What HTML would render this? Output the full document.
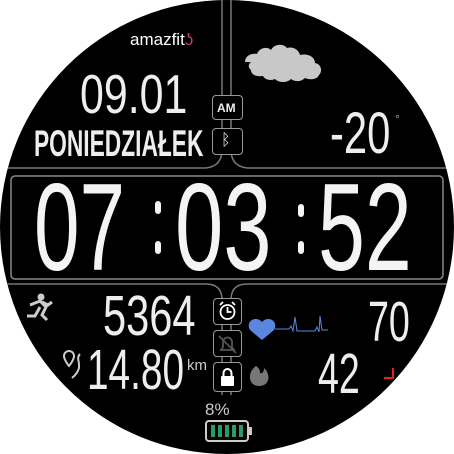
<!DOCTYPE html><html><head><meta charset="utf-8"><style>
body{margin:0;background:#fff;width:454px;height:454px;overflow:hidden;position:relative;font-family:"Liberation Sans",sans-serif}
#c{position:absolute;left:0;top:0;width:454px;height:454px;border-radius:50%;background:#000;overflow:hidden}
.t{position:absolute;color:#eee;white-space:nowrap;transform-origin:0 0;line-height:1}
.box{position:absolute;border:1.5px solid #999;border-radius:4px;background:#000;box-sizing:border-box}
</style></head><body><div id="c">
<svg width="454" height="454" style="position:absolute;left:0;top:0">
<g fill="none" stroke="#777" stroke-width="1.5">
<path d="M222 0V150Q222 166 206 168H0"/><path d="M231 0V150Q231 166 247 168H454"/>
<path d="M222 300Q222 284 206 284H0"/><path d="M231 300Q231 284 247 284H454"/>
<path d="M222 300V395M231 300V395"/>
</g>
<rect x="11" y="176" width="432" height="103" rx="4" fill="#000" stroke="#888" stroke-width="1.5"/>
<g fill="#f4f4f4"><rect x="155" y="201" width="6" height="13" rx="3"/><rect x="155" y="241" width="6" height="13" rx="3"/><rect x="298" y="204" width="6" height="13" rx="3"/><rect x="298" y="241" width="6" height="13" rx="3"/></g>
<path d="M245 62c0-6 6-9 12-8 2-6 10-8 14-4 3-6 12-7 16-2 6-2 12 2 13 7 8-2 15 2 15 8 6 1 8 8 4 12-2 5-10 5-14 3-4 4-10 4-14 1-4 4-12 4-16 0-4 2-10 1-12-3-6 1-12-1-12-6-3-2-3-6 0-8z" fill="#c8c8c8"/>
<path d="M262 322c-6-7-17-1-12 8l12 10 12-10c5-9-6-15-12-8z" fill="#5a86e0"/>
<path d="M275 329h14l2-3 2 5 2-14 2 14h18l2-4 2 5 1-16 2 14h6" fill="none" stroke="#5a86e0" stroke-width="1"/>
<path d="M393 368v10h-9" stroke="#d22" stroke-width="2" fill="none"/>
<circle cx="41" cy="297" r="3.5" fill="#ccc"/>
<path d="M30 305l10-4 6 6 -4 8 5 5M40 307l-5 9h-8M42 302l6 3 4-3" stroke="#ccc" stroke-width="3" fill="none"/>
<path d="M64 356a5 5 0 0 1 10 0c0 4-5 10-5 10s-5-6-5-10zM80 354c-6 6 6 12-8 24" stroke="#ccc" stroke-width="2" fill="none"/>
<path d="M256 366c-9 6-8 20 3 20s12-12 5-18c0 4-2 6-4 5 0-3-1-5-4-7z" fill="#777"/>
<rect x="206" y="421" width="42" height="20" rx="3" fill="none" stroke="#ccc" stroke-width="2"/><rect x="248" y="427" width="4" height="8" fill="#ccc"/>
<g fill="#2a9a6a"><rect x="211" y="425" width="4" height="12"/><rect x="218" y="425" width="4" height="12"/><rect x="225" y="425" width="4" height="12"/><rect x="232" y="425" width="4" height="12"/><rect x="239" y="425" width="4" height="12"/></g>
</svg>
<div class="t" style="left:130px;top:31px;font-size:17px;color:#fff">amazfit<span style="color:#c04070">ʖ</span></div>
<div class="t" style="left:80px;top:67px;font-size:55px;transform:scaleX(.78)">09.01</div>
<div class="t" style="left:34px;top:125px;font-size:37px;font-weight:bold;transform:scaleX(.615)">PONIEDZIAŁEK</div>
<div class="t" style="left:330px;top:105px;font-size:58px;transform:scaleX(.72)">-20</div>
<div class="t" style="left:395px;top:113px;font-size:12px;color:#aaa">°</div>
<div class="box" style="left:212px;top:95px;width:31px;height:25px"></div><div class="t" style="left:217px;top:102px;font-size:12px;font-weight:bold">AM</div>
<div class="box" style="left:212px;top:128px;width:31px;height:27px"></div><div class="t" style="left:221px;top:133px;font-size:16px">ᛒ</div>
<div class="t" style="left:34px;top:166px;font-size:124px;color:#f4f4f4;transform:scaleX(.66)">07</div>
<div class="t" style="left:175px;top:166px;font-size:124px;color:#f4f4f4;transform:scaleX(.7)">03</div>
<div class="t" style="left:318px;top:166px;font-size:124px;color:#f4f4f4;transform:scaleX(.68)">52</div>
<div class="t" style="left:103px;top:288px;font-size:57px;transform:scaleX(.73)">5364</div>
<div class="t" style="left:87px;top:342px;font-size:57px;transform:scaleX(.68)">14.80</div>
<div class="t" style="left:187px;top:358px;font-size:15px;color:#ccc">km</div>
<div class="t" style="left:368px;top:294px;font-size:57px;transform:scaleX(.66)">70</div>
<div class="t" style="left:318px;top:346px;font-size:57px;transform:scaleX(.66)">42</div>
<div class="box" style="left:213px;top:298px;width:29px;height:27px"></div>
<div class="box" style="left:213px;top:330px;width:29px;height:27px"></div>
<div class="box" style="left:213px;top:362px;width:29px;height:30px"></div>
<svg width="454" height="454" style="position:absolute;left:0;top:0">
<g stroke="#fff" stroke-width="1.8" fill="none"><circle cx="227.5" cy="312" r="7"/><path d="M227.5 307v5h4M220 305l3-3M235 305l-3-3"/></g>
<g stroke="#555" stroke-width="1.8" fill="none"><path d="M221 350h13l-2-3v-5a4.5 4.5 0 0 0-9 0v5zM219 336l17 17"/></g>
<rect x="221" y="376" width="13" height="10" rx="1" fill="#fff"/><path d="M223.5 376v-3a4 4 0 0 1 8 0v3" stroke="#fff" stroke-width="2" fill="none"/>
</svg>
<div class="t" style="left:205px;top:401px;font-size:17px;color:#ccc">8%</div>
</div></body></html>
